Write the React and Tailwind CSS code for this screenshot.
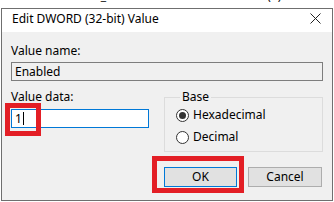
export default function App() {
  return (
    <div
      className="w-[334px] h-[202px] bg-white overflow-hidden text-[12px] leading-[16px] text-black"
      style={{ fontFamily: '"Noto Sans", "Segoe UI", Arial, sans-serif' }}
    >
      {/* registry list behind the dialog, only the bottom of one row shows */}
      <div className="h-[8px] overflow-hidden">
        <div className="flex -mt-[12px] text-[#111]">
          <span className="ml-[-4px] w-[82px]">r Value</span>
          <span className="w-[118px]">REG_DWORD</span>
          <span>0x00000000 (0)</span>
        </div>
      </div>

      <div className="ml-[1px] w-[332px] h-[193px] border border-[#6f6f6f] flex flex-col">
        {/* title bar */}
        <div className="h-[23px] bg-white flex items-start justify-between">
          <span className="pl-[10px] pt-[2px]">Edit DWORD (32-bit) Value</span>
          <svg className="mt-[4px] mr-[11px]" width="11" height="11" viewBox="0 0 11 11">
            <path d="M0.5 0.5 L10.5 10.5 M10.5 0.5 L0.5 10.5" stroke="#222" strokeWidth="1" />
          </svg>
        </div>

        {/* body */}
        <div className="flex-1 bg-[#f0f0f0] pt-[11px] px-[9px]">
          <div>Value name:</div>
          <div className="mt-[3px] h-[19px] border border-[#7d7d7d] bg-[#f0f0f0] flex items-center pl-[3px]">
            Enabled
          </div>

          <div className="mt-[8px] flex">
            <div className="w-[138px]">
              <div>Value data:</div>
              <div className="relative mt-[4px] h-[19px] border border-[#0078d7] bg-white flex items-center pl-[3px]">
                <span>1</span>
                <span className="w-[1px] h-[13px] bg-black ml-[1px]" />
                <div className="absolute left-[-7px] top-[-7px] w-[36px] h-[33px] border-[5px] border-[#e31e25]" />
              </div>
            </div>

            <fieldset className="ml-[15px] w-[159px] border border-[#dcdcdc] pl-[11px] pb-[6px]">
              <legend className="ml-[4px] px-[2px]">Base</legend>
              <label className="mt-[2px] flex items-center h-[16px]">
                <span className="w-[13px] h-[13px] rounded-full border border-[#333] bg-white flex items-center justify-center">
                  <span className="w-[7px] h-[7px] rounded-full bg-[#333]" />
                </span>
                <span className="ml-[4px]">Hexadecimal</span>
              </label>
              <label className="mt-[6px] flex items-center h-[16px]">
                <span className="w-[13px] h-[13px] rounded-full border border-[#333] bg-white" />
                <span className="ml-[4px]">Decimal</span>
              </label>
            </fieldset>
          </div>

          <div className="mt-[15px] flex justify-end pr-[1px] gap-[11px]">
            <div className="relative">
              <button className="w-[73px] h-[20px] border border-[#0078d7] bg-[#e1e1e1] leading-[16px]">
                OK
              </button>
              <div className="absolute left-[-12px] top-[-11px] w-[92px] h-[37px] border-[5px] border-[#e31e25]" />
            </div>
            <button className="w-[74px] h-[20px] border border-[#adadad] bg-[#e1e1e1] leading-[16px]">
              Cancel
            </button>
          </div>
        </div>
      </div>
    </div>
  );
}
